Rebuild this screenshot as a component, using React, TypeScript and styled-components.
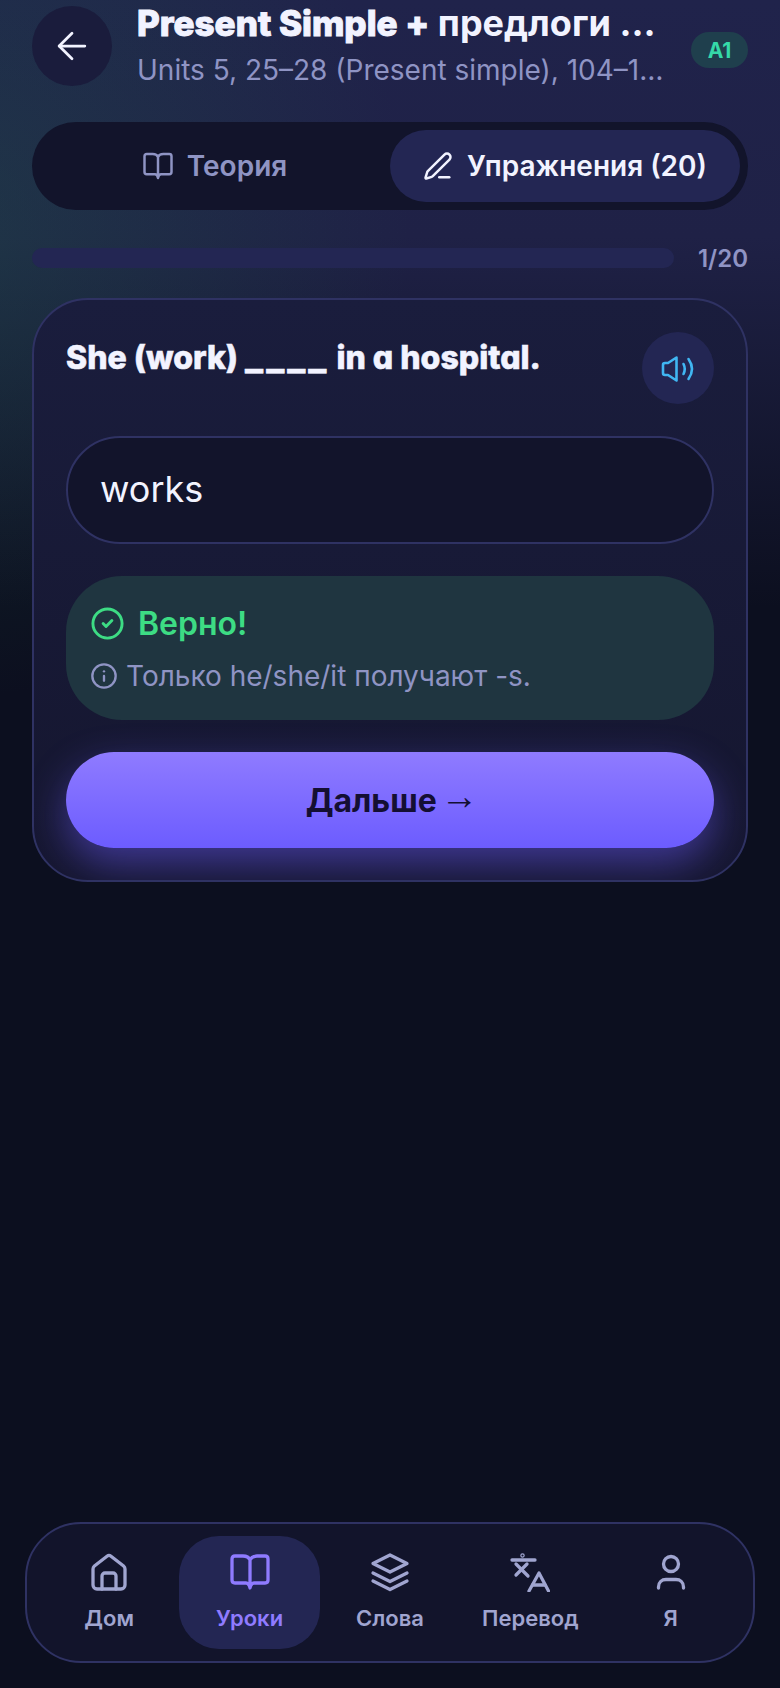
import React from "react";
import styled, { createGlobalStyle } from "styled-components";
import { ArrowLeft, PenLine, CircleCheck, Info } from "lucide-react";

const Global = createGlobalStyle`
  html, body { margin: 0; padding: 0; background: #0c0f1f; }
  * { box-sizing: border-box; }
`;

const Screen = styled.div`
  width: 780px;
  height: 1688px;
  padding: 6px 32px 25px;
  display: flex;
  flex-direction: column;
  overflow: hidden;
  font-family: Inter, "Noto Sans", sans-serif;
  background:
    radial-gradient(circle 470px at -60px 230px, rgba(30, 90, 72, 0.36) 0%, rgba(30, 90, 72, 0) 100%),
    linear-gradient(180deg, #20234b 0%, #1f2146 14%, #0c0f1f 36%);
`;

const Header = styled.header`
  display: flex;
  align-items: flex-start;
  height: 80px;
`;

const BackButton = styled.button`
  width: 80px;
  height: 80px;
  flex: none;
  border: 0;
  border-radius: 50%;
  background: #1a1c3c;
  color: #f2f3ff;
  display: flex;
  align-items: center;
  justify-content: center;
  padding: 0;
`;

const TitleBlock = styled.div`
  flex: 1;
  min-width: 0;
  margin-left: 25px;
  margin-top: -6px;
`;

const Title = styled.h1`
  margin: 0;
  font-size: 36px;
  line-height: 46px;
  font-weight: 700;
  color: #f2f3ff;
  white-space: nowrap;
  overflow: hidden;
  text-overflow: ellipsis;
`;

const RoundedLatin = styled.span`
  font-size: 35px;
  font-weight: 800;
  font-feature-settings: "cv11";
  -webkit-text-stroke: 1px #f2f3ff;
`;

const Subtitle = styled.p`
  margin: 6px 0 0;
  font-size: 28px;
  line-height: 36px;
  color: #8f94c4;
  white-space: nowrap;
  overflow: hidden;
  text-overflow: ellipsis;
`;

const LevelBadge = styled.span`
  flex: none;
  margin: 26px 0 0 21px;
  width: 57px;
  height: 36px;
  border-radius: 18px;
  background: #1f3f4d;
  color: #35d9a8;
  font-size: 21px;
  font-weight: 700;
  display: flex;
  align-items: center;
  justify-content: center;
`;

const Tabs = styled.div`
  margin-top: 36px;
  height: 88px;
  padding: 8px;
  border-radius: 44px;
  background: #12142b;
  display: grid;
  grid-template-columns: 1fr 1fr;
`;

const Tab = styled.div<{ $active?: boolean }>`
  border-radius: 36px;
  display: flex;
  align-items: center;
  justify-content: center;
  gap: 14px;
  font-size: 28px;
  font-weight: 600;
  background: ${(p) => (p.$active ? "#232653" : "transparent")};
  color: ${(p) => (p.$active ? "#f2f3ff" : "#8f94c4")};
`;

const ProgressRow = styled.div`
  margin-top: 38px;
  height: 20px;
  display: flex;
  align-items: center;
  gap: 24px;
`;

const ProgressTrack = styled.div`
  flex: 1;
  height: 20px;
  border-radius: 10px;
  background: #232653;
`;

const ProgressLabel = styled.span`
  font-size: 24px;
  font-weight: 600;
  color: #8f94c4;
`;

const Card = styled.section`
  margin-top: 30px;
  padding: 32px;
  border: 2px solid #2f3263;
  border-radius: 56px;
  background: linear-gradient(180deg, #1a1d3d 0%, #15162f 100%);
  display: flex;
  flex-direction: column;
  overflow: hidden;
`;

const QuestionRow = styled.div`
  display: flex;
  justify-content: space-between;
  align-items: flex-start;
  min-height: 72px;
`;

const Question = styled.h2`
  margin: 4px 0 0;
  font-size: 32px;
  line-height: 44px;
  font-weight: 800;
  font-feature-settings: "cv11";
  color: #f2f3ff;
  -webkit-text-stroke: 0.6px #f2f3ff;
`;

const Blank = styled.span`
  font-size: 38px;
  line-height: 0;
  font-weight: 700;
  letter-spacing: 3px;
`;

const SpeakButton = styled.button`
  width: 72px;
  height: 72px;
  border: 0;
  padding: 0;
  border-radius: 50%;
  background: #232653;
  color: #40b6f2;
  display: flex;
  align-items: center;
  justify-content: center;
`;

const AnswerBox = styled.div`
  margin-top: 32px;
  height: 108px;
  border: 2px solid #2f3263;
  border-radius: 54px;
  background: #12142b;
  padding: 0 32px 2px;
  display: flex;
  align-items: center;
  font-size: 36px;
  color: #f2f3ff;
`;

const Feedback = styled.div`
  margin-top: 32px;
  height: 144px;
  padding: 30px 24px 0;
  border-radius: 56px;
  background: #1f3540;
`;

const FeedbackTitle = styled.div`
  display: flex;
  align-items: center;
  gap: 13px;
  height: 34px;
  font-size: 32px;
  font-weight: 600;
  color: #3ddc84;
`;

const FeedbackNote = styled.div`
  margin-top: 18px;
  display: flex;
  align-items: center;
  gap: 8px;
  font-size: 28px;
  line-height: 36px;
  color: #8f94c4;
`;

const NextButton = styled.button`
  margin-top: 32px;
  height: 96px;
  border: 0;
  border-radius: 48px;
  background: linear-gradient(180deg, #8f7bff 0%, #6c5cff 100%);
  box-shadow: 0 16px 40px rgba(108, 92, 255, 0.48);
  color: #140f33;
  font-family: inherit;
  font-size: 32px;
  font-weight: 700;
`;

const ArrowGlyph = styled.span`
  font-family: "Liberation Sans", sans-serif;
  font-size: 38px;
  line-height: 0;
  font-weight: 700;
  vertical-align: 3px;
  margin: 0 -4px;
`;

const BottomNav = styled.nav`
  margin-top: auto;
  margin-left: -7px;
  margin-right: -7px;
  height: 141px;
  padding: 12px;
  border: 2px solid #2f3263;
  border-radius: 56px;
  background: #12142b;
  display: grid;
  grid-template-columns: repeat(5, 1fr);
`;

const NavItem = styled.div<{ $active?: boolean }>`
  border-radius: 40px;
  padding-top: 16px;
  display: flex;
  flex-direction: column;
  align-items: center;
  gap: 12px;
  font-size: 22px;
  line-height: 28px;
  font-weight: 600;
  background: ${(p) => (p.$active ? "#232653" : "transparent")};
  color: ${(p) => (p.$active ? "#8f7bff" : "#a0a5d0")};
`;

const NavIcon = styled.svg<{ $weight?: number }>`
  display: block;
  fill: none;
  stroke: currentColor;
  stroke-width: ${(p) => p.$weight ?? 3.3};
  stroke-linecap: round;
  stroke-linejoin: round;
`;

type IconProps = { size?: number };

const BookIcon = ({ size = 40 }: IconProps) => (
  <NavIcon width={size} height={size} viewBox="0 0 40 40">
    <path d="M20 8C19 5.5 16 4 13 4H5Q2 4 2 7V28Q2 31 5 31H16Q19 31 20 36Q21 31 24 31H35Q38 31 38 28V7Q38 4 35 4H27C24 4 21 5.5 20 8V34" />
  </NavIcon>
);

const HouseIcon = () => (
  <NavIcon width={40} height={40} viewBox="0 0 40 40">
    <path d="M18 4.2a3.2 3.2 0 0 1 4 0L34.6 14a4 4 0 0 1 1.4 3V33a4 4 0 0 1-4 4H8a4 4 0 0 1-4-4V17a4 4 0 0 1 1.4-3Z" />
    <path d="M13 37V24a3 3 0 0 1 3-3h8a3 3 0 0 1 3 3V37" />
  </NavIcon>
);

const LayersIcon = () => (
  <NavIcon width={40} height={40} viewBox="0 0 40 40">
    <path d="M20 3L37 11.5L20 20L3 11.5Z" />
    <path d="M3 21L20 29.5L37 21" />
    <path d="M3 29L20 37.5L37 29" />
  </NavIcon>
);

const TranslateIcon = () => (
  <NavIcon width={40} height={40} viewBox="0 0 40 40">
    <circle cx="12.5" cy="3.5" r="0.6" />
    <path d="M2 8H25" />
    <path d="M6 12L18 24" />
    <path d="M17 12L6 23" />
    <path d="M19 39L29 21L38.5 39" />
    <path d="M22.5 33H35" />
  </NavIcon>
);

const UserIcon = () => (
  <NavIcon width={40} height={40} viewBox="0 0 40 40">
    <circle cx="20" cy="12" r="7.5" />
    <path d="M7.5 36V35C7.5 30 11 27.5 15 27.5H25C29 27.5 32.5 30 32.5 35V36" />
  </NavIcon>
);

const SpeakerIcon = () => (
  <NavIcon width={40} height={40} viewBox="0 0 40 40" $weight={2.6}>
    <path d="M18.5 9.5L10 15H7Q5 15 5 17V25Q5 27 7 27H10L18.5 32.5Z" />
    <path d="M25.5 16Q28 21 25.5 26" />
    <path d="M30.5 11Q37.5 21 30.5 31" />
  </NavIcon>
);

const navItems = [
  { label: "Дом", Icon: HouseIcon },
  { label: "Уроки", Icon: BookIcon, active: true },
  { label: "Слова", Icon: LayersIcon },
  { label: "Перевод", Icon: TranslateIcon },
  { label: "Я", Icon: UserIcon },
];

export default function App() {
  return (
    <Screen>
      <Global />
      <Header>
        <BackButton aria-label="Назад">
          <ArrowLeft size={44} strokeWidth={1.5} />
        </BackButton>
        <TitleBlock>
          <Title>
            <RoundedLatin>Present Simple +</RoundedLatin> предлоги места и времени
          </Title>
          <Subtitle>Units 5, 25–28 (Present simple), 104–107 (Prepositions)</Subtitle>
        </TitleBlock>
        <LevelBadge>A1</LevelBadge>
      </Header>
      <Tabs>
        <Tab>
          <BookIcon size={30} />
          Теория
        </Tab>
        <Tab $active>
          <PenLine size={30} strokeWidth={2} />
          Упражнения (20)
        </Tab>
      </Tabs>
      <ProgressRow>
        <ProgressTrack />
        <ProgressLabel>1/20</ProgressLabel>
      </ProgressRow>
      <Card>
        <QuestionRow>
          <Question>
            She (work) <Blank>____</Blank> in a hospital.
          </Question>
          <SpeakButton aria-label="Озвучить">
            <SpeakerIcon />
          </SpeakButton>
        </QuestionRow>
        <AnswerBox>works</AnswerBox>
        <Feedback>
          <FeedbackTitle>
            <CircleCheck size={35} strokeWidth={2} />
            Верно!
          </FeedbackTitle>
          <FeedbackNote>
            <Info size={28} strokeWidth={2} />
            Только he/she/it получают -s.
          </FeedbackNote>
        </Feedback>
        <NextButton>
          Дальше <ArrowGlyph>→</ArrowGlyph>
        </NextButton>
      </Card>
      <BottomNav>
        {navItems.map(({ label, Icon, active }) => (
          <NavItem key={label} $active={active}>
            <Icon />
            {label}
          </NavItem>
        ))}
      </BottomNav>
    </Screen>
  );
}
